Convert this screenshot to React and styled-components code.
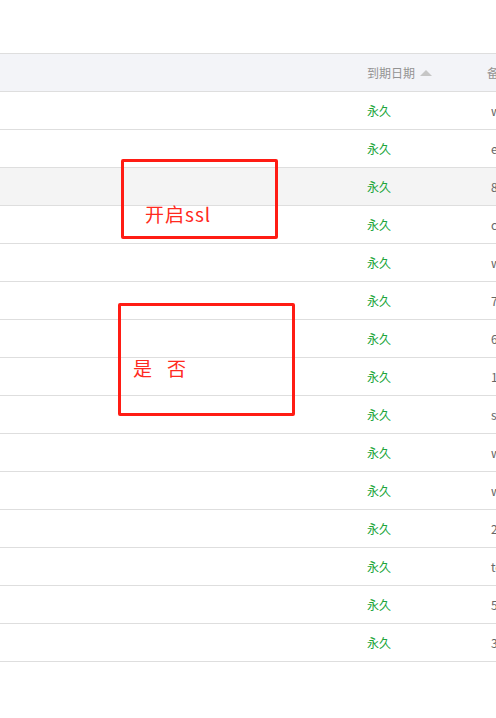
import styled, { createGlobalStyle } from 'styled-components';

const GlobalStyle = createGlobalStyle`
  html, body {
    margin: 0;
    padding: 0;
    background: #ffffff;
    overflow: hidden;
  }
  body {
    font-family: "Noto Sans CJK SC", "Liberation Sans", sans-serif;
  }
`;

const Page = styled.div`
  position: relative;
  width: 496px;
  height: 718px;
  padding-top: 53px;
  box-sizing: border-box;
  overflow: hidden;
`;

const Table = styled.div`
  width: 720px;
  font-size: 12px;
`;

const Row = styled.div`
  display: grid;
  grid-template-columns: 359px 120px 241px;
  align-items: center;
  height: 38px;
  box-sizing: border-box;
  border-bottom: 1px solid #dedede;
  background: ${(p) => (p.hover ? '#f4f4f4' : '#ffffff')};
`;

const HeadRow = styled(Row)`
  height: 39px;
  border-top: 1px solid #dedede;
  background: #f3f4f8;
  color: #939393;
`;

const Cell = styled.div`
  padding-left: 8px;
  white-space: nowrap;
  display: flex;
  align-items: center;
`;

const Expire = styled(Cell)`
  color: #20a53a;
`;

const Note = styled(Cell)`
  padding-left: 12px;
  color: #666666;
`;

const SortUp = styled.span`
  width: 0;
  height: 0;
  margin-left: 5px;
  border-left: 6px solid transparent;
  border-right: 6px solid transparent;
  border-bottom: 6px solid #c6c6c6;
`;

const Mark = styled.div`
  position: absolute;
  left: ${(p) => p.x}px;
  top: ${(p) => p.y}px;
  width: ${(p) => p.w}px;
  height: ${(p) => p.h}px;
  box-sizing: border-box;
  border: 3px solid #ff1c14;
  border-radius: 2px;
  padding: ${(p) => p.pad};
`;

const MarkText = styled.div`
  display: flex;
  gap: ${(p) => p.gap || 0}px;
  color: #ff2a20;
  font-size: 19px;
  line-height: 19px;
  letter-spacing: ${(p) => p.spacing || 0}px;
  font-family: "Noto Sans CJK SC", "Liberation Sans", sans-serif;
`;

const notes = [
  'www.example.com',
  'example.net',
  '88.cn',
  'cdn.site.com',
  'web.site.cn',
  '7s.com',
  '66.net',
  '1024.org',
  'shop.cn',
  'wap.site.com',
  'www.test.com',
  '2019.cn',
  'test.net',
  '51.com',
  '360.cn',
];

export default function App() {
  return (
    <>
      <GlobalStyle />
      <Page>
        <Table>
          <HeadRow>
            <Cell />
            <Cell>
              到期日期
              <SortUp />
            </Cell>
            <Cell>备注</Cell>
          </HeadRow>
          {notes.map((n, i) => (
            <Row key={i} hover={i === 2}>
              <Cell />
              <Expire>永久</Expire>
              <Note>{n}</Note>
            </Row>
          ))}
        </Table>

        <Mark x={121} y={159} w={157} h={80} pad="42px 0 0 21px">
          <MarkText spacing={1}>开启ssl</MarkText>
        </Mark>
        <Mark x={118} y={303} w={177} h={113} pad="52px 0 0 12px">
          <MarkText gap={15}>
            <span>是</span>
            <span>否</span>
          </MarkText>
        </Mark>
      </Page>
    </>
  );
}
